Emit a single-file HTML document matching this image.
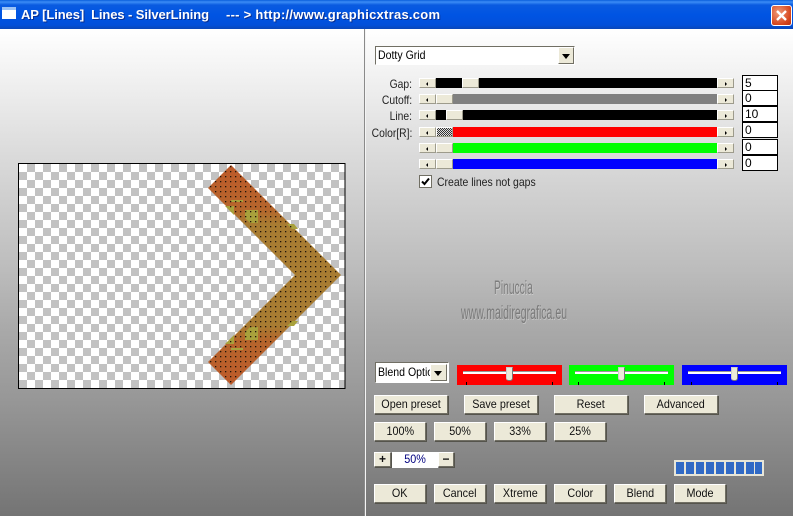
<!DOCTYPE html>
<html><head><meta charset="utf-8"><style>
html,body{margin:0;padding:0}
#p{position:relative;width:793px;height:516px;overflow:hidden;background:linear-gradient(#fff 29px,#f6f6f6 60px,#dcdcdc 150px,#bcbcbc 270px,#a9a9a9 330px,#979797 400px,#747474 516px);font:11px "Liberation Sans",sans-serif;color:#000}
#p div{position:absolute;box-sizing:border-box}
#p span{display:inline-block;transform:scaleX(.9);white-space:pre}
.tb{left:0;top:0;width:793px;height:29px;background:linear-gradient(#0a5fdc 0,#3b8cf5 2px,#0a5be0 5px,#0054e3 15px,#0250da 25px,#0a47b8 29px)}
.t{top:6px;color:#fff;font:bold 13px/18px "Liberation Sans",sans-serif;white-space:pre;text-shadow:1px 1px 0 #0a2f90}
.b{background:#ece9d8;border:1px solid;border-color:#fff #716f64 #716f64 #fff;box-shadow:1px 1px 0 #55544c;text-align:center;line-height:17px;height:19px;width:52px;font-size:12px;color:#111}
.sb{width:17px;height:10px;background:#ece9d8;border-top:1px solid #fff;border-left:1px solid #fff;border-bottom:1px solid #9d9b8c;border-right:1px solid #9d9b8c}
.sb:after{content:"";position:absolute;left:6px;top:3px;border:2px solid transparent}
.l:after{border-right-color:#000;border-left:0}
.r:after{border-left-color:#000;border-right:0;left:7px}
.tk{left:436px;width:281px;height:10px}
.th{width:17px;height:10px;background:#ece9d8;border-top:1px solid #fff;border-left:1px solid #fff;border-bottom:1px solid #9d9b8c;border-right:1px solid #9d9b8c}
.lb{left:340px;width:72px;text-align:right;font-size:12px;line-height:14px;color:#222}
#p .lb span{transform-origin:100% 50%;transform:scaleX(.86)}
.in{left:742px;width:36px;height:16px;background:#fff;border:1px solid #000;font-size:12px;line-height:14px;padding-left:2px}
.cb{height:20px;width:105px}
.ln{height:3px;background:#fff;border-top:1px solid #999;top:6px;left:6px;width:93px}
.tm{width:7px;height:14px;top:2px;left:49px;background:#ece9d8;border:1px solid #ccc;border-right-color:#777;border-bottom-color:#777;border-radius:0 0 3px 3px}
.tc{width:1px;height:3px;background:#000;top:17px}
</style></head><body><div id="p">
<div class="tb"></div>
<div style="left:2px;top:7px;width:14px;height:12px;background:#fff;border-top:3px solid #9cc3f5"></div>
<div class="t" style="left:21px;letter-spacing:-.1px">AP [Lines]  Lines - SilverLining</div>
<div class="t" style="left:226px;letter-spacing:.26px">--- &gt; http://www.graphicxtras.com</div>
<div style="left:771px;top:5px;width:21px;height:21px;border-radius:3px;border:1px solid #fff;background:radial-gradient(circle at 35% 35%,#f09a78,#d6451c 70%,#b93010)"></div>
<svg style="position:absolute;left:771px;top:5px" width="21" height="21"><path d="M6 6L15 15M15 6L6 15" stroke="#fff" stroke-width="2.4"/></svg>
<div style="left:364px;top:29px;width:1px;height:487px;background:#8a8a8a"></div>
<div style="left:365px;top:29px;width:1px;height:487px;background:#f4f4f4"></div>

<!-- canvas -->
<svg style="position:absolute;left:18px;top:163px" width="328" height="226" viewBox="18 163 328 226">
<defs>
<pattern id="c" x="19" y="164" width="16" height="16" patternUnits="userSpaceOnUse"><rect width="16" height="16" fill="#fff"/><rect x="8" width="8" height="8" fill="#c2c2c2"/><rect y="8" width="8" height="8" fill="#c2c2c2"/></pattern>
<pattern id="d" x="230" y="166" width="5" height="5" patternUnits="userSpaceOnUse"><rect width="1.3" height="1.3" fill="#1f1408"/></pattern>
<linearGradient id="g" x1="0" y1="165" x2="0" y2="385" gradientUnits="userSpaceOnUse"><stop offset="0" stop-color="#bd5a2a"/><stop offset=".2" stop-color="#b6652c"/><stop offset=".27" stop-color="#a87c32"/><stop offset=".73" stop-color="#a87c32"/><stop offset=".8" stop-color="#b6652c"/><stop offset="1" stop-color="#bd5a2a"/></linearGradient>
</defs>
<rect x="18" y="163" width="327" height="225" fill="url(#c)"/>
<rect x="18.5" y="163.5" width="326.5" height="225" fill="none" stroke="#000"/>
<polygon points="231,165 341,275 231,385 208,362 295,275 208,188" fill="url(#g)"/>
<path d="M225 206h9v9zM245 210h13v13h-8l-5-5zM231 200h12v2h-12zM287 224h7l4 5h-6zM225 344h9v-9zM245 340h13v-13h-8l-5 5zM231 348h12v2h-12zM287 326h7l4-5h-6z" fill="#a8a13c"/>
<polygon points="231,165 341,275 231,385 208,362 295,275 208,188" fill="url(#d)"/>
</svg>

<!-- dropdown -->
<div style="left:375px;top:46px;width:200px;height:19px;background:#fff;border:1px solid;border-color:#716f64 #fff #fff #716f64;font-size:12px;line-height:17px;padding-left:2px"><span style="transform-origin:0 50%;transform:scaleX(.88)">Dotty Grid</span></div>
<div style="left:558px;top:47px;width:16px;height:17px;background:#ece9d8;border:1px solid;border-color:#fff #716f64 #716f64 #fff"></div>
<div style="left:562px;top:54px;width:0;height:0;border:4px solid transparent;border-top:5px solid #000;border-bottom:0"></div>

<!-- sliders -->
<div class="lb" style="top:77px"><span>Gap:</span></div>
<div class="lb" style="top:93px"><span>Cutoff:</span></div>
<div class="lb" style="top:109px"><span>Line:</span></div>
<div class="lb" style="top:126px"><span>Color[R]:</span></div>

<div class="sb l" style="left:419px;top:78px"></div><div class="tk" style="top:78px;background:#000"></div><div class="th" style="left:462px;top:78px"></div><div class="sb r" style="left:717px;top:78px"></div>
<div class="sb l" style="left:419px;top:94px"></div><div class="tk" style="top:94px;background:#808080"></div><div class="th" style="left:436px;top:94px"></div><div class="sb r" style="left:717px;top:94px"></div>
<div class="sb l" style="left:419px;top:110px"></div><div class="tk" style="top:110px;background:#000"></div><div class="th" style="left:446px;top:110px"></div><div class="sb r" style="left:717px;top:110px"></div>
<div class="sb l" style="left:419px;top:127px"></div><div class="tk" style="top:127px;background:#f00"></div><div class="th" style="left:436px;top:127px;background:repeating-conic-gradient(#333 0 25%,#ddd 0 50%) 0 0/2px 2px"></div><div class="sb r" style="left:717px;top:127px"></div>
<div class="sb l" style="left:419px;top:143px"></div><div class="tk" style="top:143px;background:#0f0"></div><div class="th" style="left:436px;top:143px"></div><div class="sb r" style="left:717px;top:143px"></div>
<div class="sb l" style="left:419px;top:159px"></div><div class="tk" style="top:159px;background:#00f"></div><div class="th" style="left:436px;top:159px"></div><div class="sb r" style="left:717px;top:159px"></div>

<div class="in" style="top:75px">5</div>
<div class="in" style="top:90px">0</div>
<div class="in" style="top:106px">10</div>
<div class="in" style="top:122px">0</div>
<div class="in" style="top:139px">0</div>
<div class="in" style="top:155px">0</div>

<div style="left:419px;top:175px;width:13px;height:13px;background:#fff;border:1px solid #716f64"></div>
<svg style="position:absolute;left:419px;top:175px" width="13" height="13"><path d="M3 6.5L5.5 9L10 3.5" fill="none" stroke="#000" stroke-width="2"/></svg>
<div style="left:437px;top:175px;font-size:12px;line-height:14px;color:#222"><span style="transform-origin:0 50%;transform:scaleX(.87)">Create lines not gaps</span></div>

<!-- watermark -->
<div style="left:494px;top:278px;font-size:19px;line-height:22px;color:#7d7d7d;transform:scaleX(.54);transform-origin:0 0;white-space:pre;text-shadow:1px 1px 0 #ccc">Pinuccia</div>
<div style="left:461px;top:303px;font-size:19px;line-height:22px;color:#7a7a7a;transform:scaleX(.555);transform-origin:0 0;white-space:pre;text-shadow:1px 1px 0 #c4c4c4">www.maidiregrafica.eu</div>

<!-- blend -->
<div style="left:375px;top:362px;width:74px;height:21px;background:#fff;border:1px solid #716f64;border-right-color:#fff;border-bottom-color:#fff;font-size:12px;line-height:19px;padding-left:2px;overflow:hidden"><span style="transform-origin:0 50%;transform:scaleX(.88)">Blend Optio</span></div>
<div style="left:430px;top:364px;width:17px;height:17px;background:#ece9d8;border:1px solid;border-color:#fff #716f64 #716f64 #fff"></div>
<div style="left:434px;top:371px;width:0;height:0;border:4px solid transparent;border-top:5px solid #000;border-bottom:0"></div>

<div class="cb" style="left:457px;top:365px;background:#f00"><div class="ln"></div><div class="tm"></div><div class="tc" style="left:9px"></div><div class="tc" style="left:95px"></div></div>
<div class="cb" style="left:569px;top:365px;background:#0f0"><div class="ln"></div><div class="tm"></div><div class="tc" style="left:9px"></div><div class="tc" style="left:95px"></div></div>
<div class="cb" style="left:682px;top:365px;background:#00f"><div class="ln"></div><div class="tm"></div><div class="tc" style="left:9px"></div><div class="tc" style="left:95px"></div></div>

<!-- buttons -->
<div class="b" style="left:374px;top:395px;width:74px"><span>Open preset</span></div>
<div class="b" style="left:464px;top:395px;width:74px"><span>Save preset</span></div>
<div class="b" style="left:554px;top:395px;width:74px"><span>Reset</span></div>
<div class="b" style="left:644px;top:395px;width:74px"><span>Advanced</span></div>

<div class="b" style="left:374px;top:422px"><span>100%</span></div>
<div class="b" style="left:434px;top:422px"><span>50%</span></div>
<div class="b" style="left:494px;top:422px"><span>33%</span></div>
<div class="b" style="left:554px;top:422px"><span>25%</span></div>

<div class="b" style="left:374px;top:452px;width:17px;height:15px;line-height:13px;font-weight:bold">+</div>
<div style="left:392px;top:452px;width:46px;height:16px;background:#fff;color:#000080;text-align:center;font-size:12px;line-height:14px"><span>50%</span></div>
<div class="b" style="left:438px;top:452px;width:16px;height:15px;line-height:12px;font-weight:bold">−</div>

<div style="left:674px;top:460px;width:90px;height:16px;background:#e8e6d8"></div>
<svg style="position:absolute;left:674px;top:460px" width="90" height="16"><g fill="#316ac5"><rect x="2" y="2" width="8" height="12"/><rect x="12" y="2" width="8" height="12"/><rect x="22" y="2" width="8" height="12"/><rect x="32" y="2" width="8" height="12"/><rect x="42" y="2" width="8" height="12"/><rect x="52" y="2" width="8" height="12"/><rect x="62" y="2" width="8" height="12"/><rect x="72" y="2" width="8" height="12"/><rect x="81" y="2" width="7" height="12"/></g></svg>

<div class="b" style="left:374px;top:484px"><span>OK</span></div>
<div class="b" style="left:434px;top:484px"><span>Cancel</span></div>
<div class="b" style="left:494px;top:484px"><span>Xtreme</span></div>
<div class="b" style="left:554px;top:484px"><span>Color</span></div>
<div class="b" style="left:614px;top:484px"><span>Blend</span></div>
<div class="b" style="left:674px;top:484px"><span>Mode</span></div>
</div></body></html>
